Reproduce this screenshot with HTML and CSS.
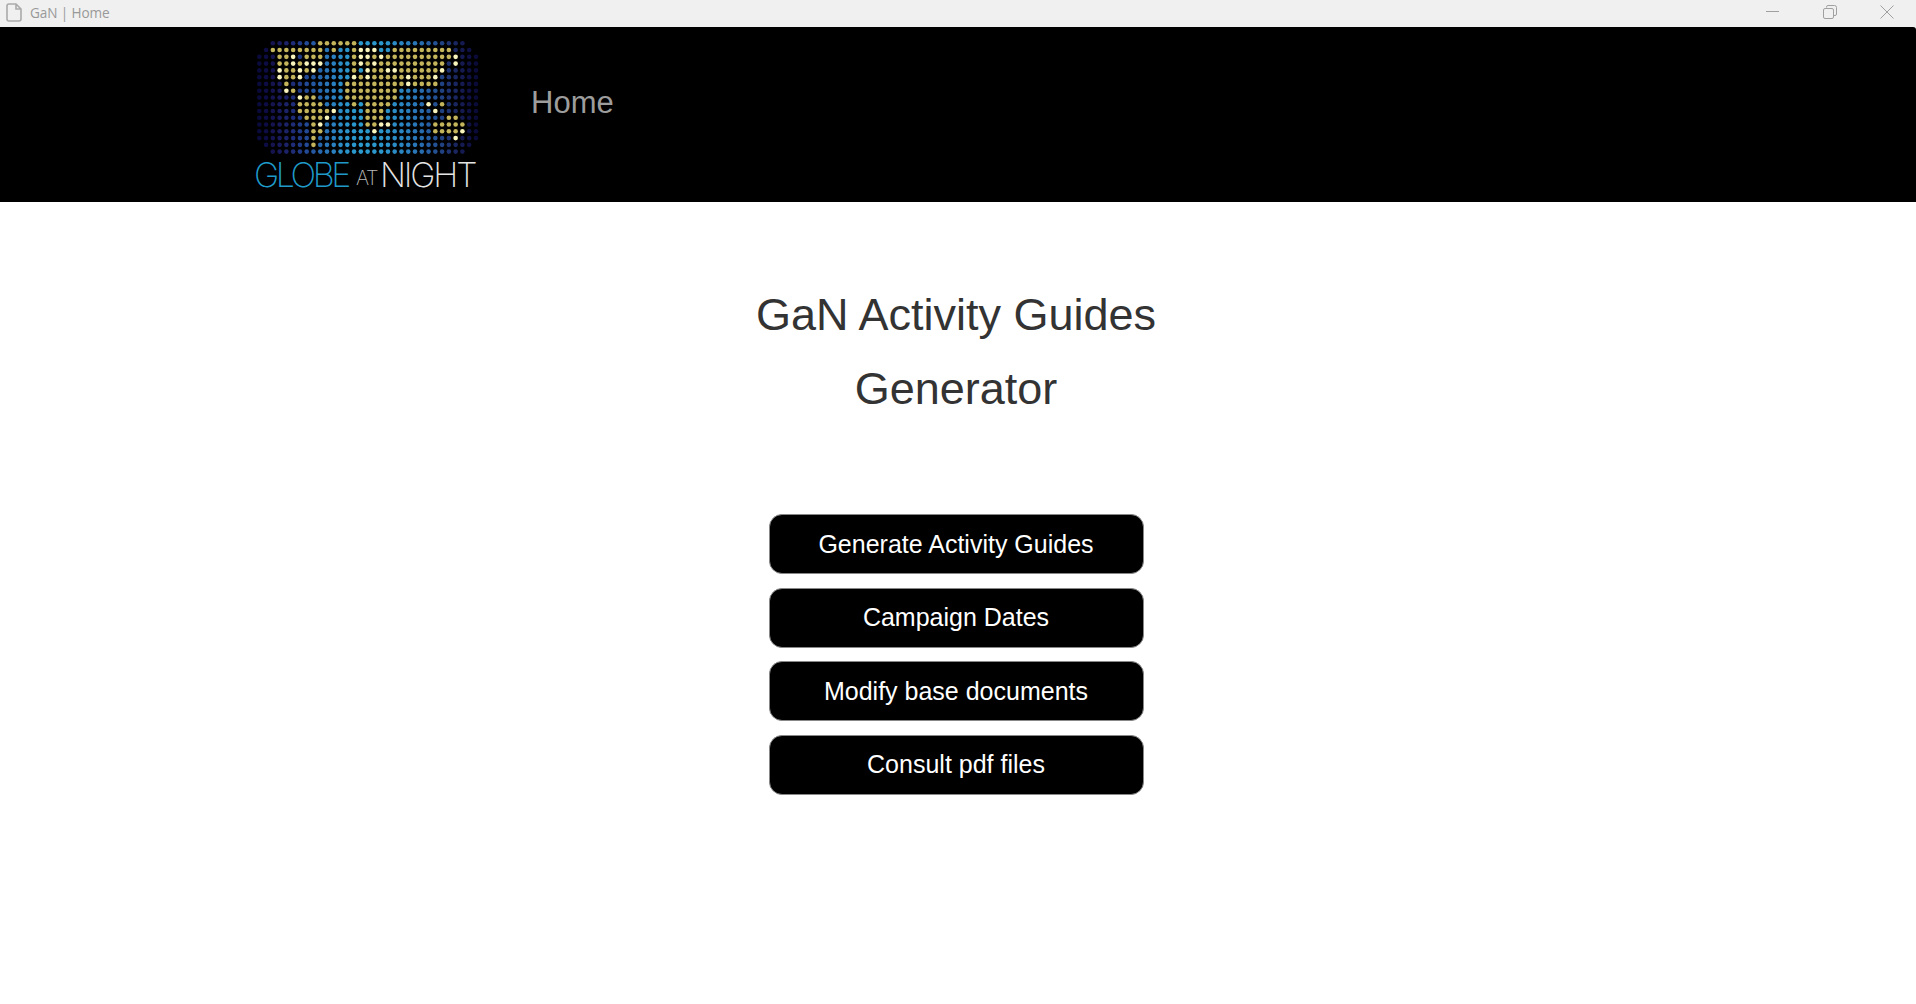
FILE: index.html
```html
<!DOCTYPE html>
<html lang="en">
<head>
    <meta charset="UTF-8">
    <title>GaN | Home</title>
    <link rel="stylesheet" href="styles.css">
</head>
<body>

    <div class="titlebar">
        <div class="titlebar-left">
            <svg class="doc-icon" width="16" height="19" viewBox="0 0 16 19">
                <path d="M1 3 a2 2 0 0 1 2-2 H10 L15 6 V16 a2 2 0 0 1-2 2 H3 a2 2 0 0 1-2-2 Z M10 1 V6 H15" />
            </svg>
            <span class="titlebar-text">GaN | Home</span>
        </div>
        <div class="window-buttons">
            <svg width="14" height="14" viewBox="0 0 14 14"><path d="M0 6.5 H13" /></svg>
            <svg width="14" height="14" viewBox="0 0 14 14"><path d="M3.5 2.5 V2 a1.5 1.5 0 0 1 1.5-1.5 H11.5 a2 2 0 0 1 2 2 V9 a1.5 1.5 0 0 1-1.5 1.5 H11 M0.5 5 a1.5 1.5 0 0 1 1.5-1.5 H9 a1.5 1.5 0 0 1 1.5 1.5 V12 a1.5 1.5 0 0 1-1.5 1.5 H2 a1.5 1.5 0 0 1-1.5-1.5 Z" /></svg>
            <svg width="14" height="14" viewBox="0 0 14 14"><path d="M0.5 0.5 L13.5 13.5 M13.5 0.5 L0.5 13.5" /></svg>
        </div>
    </div>

    <header class="navbar">
        <svg class="logo" id="logo" width="224" height="152" viewBox="0 0 224 152">
            <g id="logoDots"></g>
            <text class="logo-globe" x="0" y="149">GLOBE</text>
            <text class="logo-at" x="102" y="147">AT</text>
            <text class="logo-night" x="126" y="149">NIGHT</text>
        </svg>
        <a class="nav-link" href="#">Home</a>
    </header>

    <main class="content">
        <h1 class="page-title">GaN Activity Guides<br>Generator</h1>
        <div class="menu">
            <button class="menu-btn">Generate Activity Guides</button>
            <button class="menu-btn">Campaign Dates</button>
            <button class="menu-btn">Modify base documents</button>
            <button class="menu-btn">Consult pdf files</button>
        </div>
    </main>

    <script src="logo.js"></script>
</body>
</html>
```

FILE: styles.css
```css
html, body {
    margin: 0;
    padding: 0;
    height: 100%;
    overflow: hidden;
    background-color: #f0f0f0;
    font-family: "Liberation Sans", Arial, sans-serif;
}

body {
    display: flex;
    flex-direction: column;
}

.titlebar {
    display: flex;
    justify-content: space-between;
    align-items: center;
    box-sizing: border-box;
    height: 27px;
    padding: 0 0 3px 6px;
    background-color: #f0f0f0;
    color: #999;
}

.titlebar-left {
    display: flex;
    align-items: center;
    gap: 8px;
}

.titlebar-text {
    font-family: "Open Sans", sans-serif;
    font-size: 13.6px;
    letter-spacing: -0.1px;
}

.titlebar svg {
    display: block;
    fill: none;
    stroke: #a0a0a0;
    stroke-width: 1;
}

.titlebar svg.doc-icon {
    stroke: #aaa;
    stroke-width: 1.6;
}

.window-buttons {
    display: flex;
    gap: 43px;
    padding-right: 22px;
}

.navbar {
    display: flex;
    align-items: flex-start;
    gap: 53px;
    height: 175px;
    padding-left: 254px;
    background-color: #000;
    border-top-right-radius: 3px;
}

.logo {
    display: block;
    margin-top: 11px;
    overflow: visible;
}

.logo text {
    font-family: Inter, sans-serif;
    font-weight: 200;
    font-size: 34px;
}

.logo text.logo-globe {
    fill: #1f9ac9;
    letter-spacing: -3.4px;
}

.logo text.logo-at {
    fill: #b8b8b8;
    font-size: 20px;
    letter-spacing: -1.5px;
}

.logo text.logo-night {
    fill: #e4e4e4;
    letter-spacing: -2.2px;
}

.nav-link {
    margin-top: 56px;
    color: #9d9d9d;
    font-size: 31px;
    line-height: 40px;
    text-decoration: none;
}

.content {
    flex: 1;
    padding: 76px 4px 0 0;
    background-color: #fff;
    text-align: center;
}

.page-title {
    margin: 0;
    color: #333;
    font-size: 45px;
    font-weight: 400;
    line-height: 74px;
}

.menu {
    display: flex;
    flex-direction: column;
    align-items: center;
    gap: 13.5px;
    margin-top: 88px;
}

.menu-btn {
    width: 375px;
    height: 60px;
    padding: 0;
    background-color: #000;
    color: #fff;
    border: 1px solid #888;
    border-radius: 13px;
    font-family: inherit;
    font-size: 25px;
    cursor: pointer;
}
```

FILE: logo.js
```js
// Dot map of the Globe at Night logo. ' ' no dot, '.' sea, 'y' land, 'w' bright land
const rows = [
    "  .......yyyyyy................  ",
    " .yyyyyyyy.y..ywww..yyyyyyyyy... ",
    "...yyw.yyy....ywwywyyyyyyyyyyw...",
    "...yywywww....ywywyyyyyyyyyy.w...",
    "...wyywyw.....y.wyywwyyyyyyw.....",
    "...wyyw.......wywyyyyywyyyw......",
    "....y........yyyyyyyyywyyyy......",
    "....wy.......yyyyyyyy............",
    "......wyy....yyyyyyyy............",
    "......yyyy....y.yyyy.....w.y.....",
    "......yyyyyw....yyy.......w......",
    ".......yyyw.....yyy.........yy...",
    "........yw......yyww......yyyyy..",
    "........yy.......w........yyyyw..",
    "........y....................w...",
    " .......y....................... ",
    "  .............................  "
];

// sea colour for each column, dark at the edges and cyan in the middle
const seaColors = [
    '#0b0a3c', '#0d0c44', '#15144f', '#191a5c', '#1c2268', '#1f2d78', '#213a86',
    '#234a96', '#2558a2', '#2767ae', '#2975b8', '#2a80c0', '#2b8cc6', '#2b94cb',
    '#2b98cd', '#2b9acf', '#2b9acf', '#2b98ce', '#2b96cc', '#2b92ca', '#2b8cc6',
    '#2a86c2', '#2a80be', '#2977b8', '#286cb0', '#265ea4', '#245094', '#214282',
    '#1e3270', '#1a2660', '#151a50', '#0f1144', '#0b0b3a'
];

const dots = document.getElementById('logoDots');
const pitch = 6.77;

rows.forEach((row, r) => {
    row.split('').forEach((cell, c) => {
        if (cell === ' ') return;
        const dot = document.createElementNS('http://www.w3.org/2000/svg', 'circle');
        dot.setAttribute('cx', 5.3 + c * pitch);
        dot.setAttribute('cy', 5.3 + r * pitch);
        dot.setAttribute('r', 2.3);
        dot.setAttribute('fill', cell === 'y' ? '#c4b55c' : cell === 'w' ? '#f8f4bc' : seaColors[c]);
        dots.appendChild(dot);
    });
});
```
